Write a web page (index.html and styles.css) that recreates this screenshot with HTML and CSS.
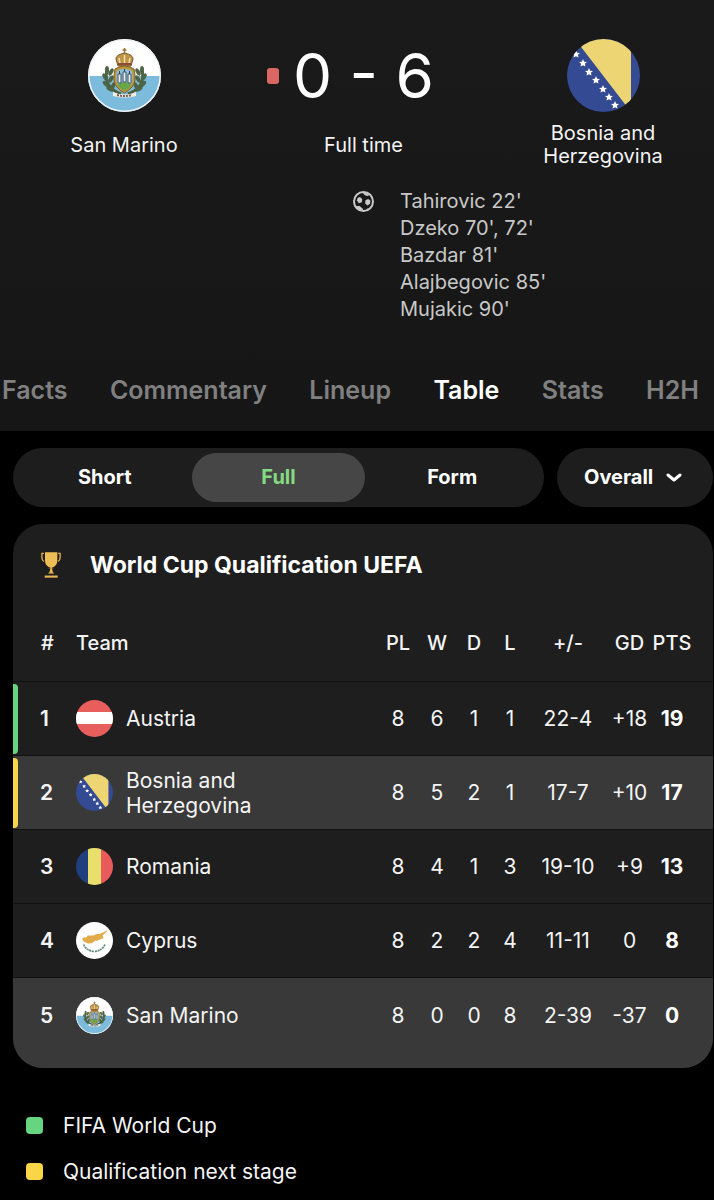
FILE: index.html
```html
<!DOCTYPE html>
<html lang="en">
<head>
    <meta charset="UTF-8">
    <meta name="viewport" content="width=device-width, initial-scale=1.0">
    <title>San Marino - Bosnia and Herzegovina</title>
    <link rel="stylesheet" href="styles.css">
</head>
<body>
    <!-- Shared flags -->
    <svg class="sprite" aria-hidden="true">
        <symbol id="star" viewBox="0 0 20 20">
            <polygon fill="#fff" points="10,0 12.9,6.6 20,7.3 14.7,12 16.2,19 10,15.4 3.8,19 5.3,12 0,7.3 7.1,6.6"/>
        </symbol>
        <symbol id="bosnia" viewBox="0 0 73 73">
            <rect width="73" height="73" fill="#344b93"/>
            <polygon fill="#edd573" points="8,0 64,0 64,73"/>
            <use href="#star" x="5" y="11" width="8" height="8"/>
            <use href="#star" x="12" y="20" width="8" height="8"/>
            <use href="#star" x="18" y="29" width="8" height="8"/>
            <use href="#star" x="25" y="37" width="8" height="8"/>
            <use href="#star" x="32" y="46" width="8" height="8"/>
            <use href="#star" x="38" y="54" width="8" height="8"/>
            <use href="#star" x="44" y="62" width="8" height="8"/>
        </symbol>
        <symbol id="sanmarino" viewBox="0 0 73 73">
            <rect width="73" height="73" fill="#fff"/>
            <rect y="37" width="73" height="36" fill="#7cbbdc"/>
            <!-- laurel branches -->
            <path d="M19 31C16 43 22 51 33 55M54 31C57 43 51 51 40 55" fill="none" stroke="#4b6140" stroke-width="3"/>
            <g fill="#4c6547">
                <ellipse cx="19" cy="31" rx="2" ry="4"/>
                <ellipse cx="23" cy="33" rx="2" ry="4" transform="rotate(30 23 33)"/>
                <ellipse cx="17" cy="38" rx="2" ry="4" transform="rotate(-30 17 38)"/>
                <ellipse cx="23" cy="40" rx="2" ry="4" transform="rotate(30 23 40)"/>
                <ellipse cx="18" cy="45" rx="2" ry="4" transform="rotate(-45 18 45)"/>
                <ellipse cx="25" cy="47" rx="2" ry="4" transform="rotate(20 25 47)"/>
                <ellipse cx="22" cy="50" rx="2" ry="4" transform="rotate(-60 22 50)"/>
                <ellipse cx="54" cy="31" rx="2" ry="4"/>
                <ellipse cx="50" cy="33" rx="2" ry="4" transform="rotate(-30 50 33)"/>
                <ellipse cx="56" cy="38" rx="2" ry="4" transform="rotate(30 56 38)"/>
                <ellipse cx="50" cy="40" rx="2" ry="4" transform="rotate(-30 50 40)"/>
                <ellipse cx="55" cy="45" rx="2" ry="4" transform="rotate(45 55 45)"/>
                <ellipse cx="48" cy="47" rx="2" ry="4" transform="rotate(-20 48 47)"/>
                <ellipse cx="51" cy="50" rx="2" ry="4" transform="rotate(60 51 50)"/>
            </g>
            <!-- crown -->
            <path d="M36.5 9V15M34.5 11H38.5" stroke="#9b7334" stroke-width="1.5"/>
            <path d="M30 27L28 20C28 16 33 15 36.5 14C40 15 45 16 45 20L43 27Z" fill="#bf9447" stroke="#76552a"/>
            <path d="M32 24L31 19M36.5 24V16M41 24L42 19" stroke="#eee0ad" stroke-width="1.5"/>
            <path d="M30 25H43" stroke="#8b4c35" stroke-width="2"/>
            <!-- shield with three towers -->
            <path d="M27 30Q36.5 24 46 30Q49 43 44 48Q40 52 36.5 54Q32 52 29 48Q24 43 27 30Z" fill="#bd963d" stroke="#765c2a"/>
            <path d="M29 32Q36.5 28 44 32Q46 42 42 47L36.5 51L31 47Q27 42 29 32Z" fill="#8cc0df"/>
            <path d="M30 45Q36.5 41 43 45L42 48L36.5 52L31 48Z" fill="#66a747"/>
            <path d="M30 35H33V44H30ZM35 33H38V43H35ZM40 35H43V44H40Z" fill="#e7e9e5" stroke="#41566c"/>
            <path d="M31.5 32V35M36.5 30V33M41.5 32V35" stroke="#344357"/>
            <!-- ribbon -->
            <path d="M25 53Q36.5 58 48 53V57Q36.5 60 25 57Z" fill="#f2eee5"/>
            <path d="M29 56Q36.5 58 44 56" fill="none" stroke="#785b54" stroke-width="2" stroke-dasharray="2 1"/>
            <circle cx="36.5" cy="36.5" r="36" fill="none" stroke="#eef3f5" stroke-width="2"/>
        </symbol>
        <symbol id="austria" viewBox="0 0 37 37">
            <rect width="37" height="37" fill="#e85e5c"/>
            <rect y="12" width="37" height="12" fill="#fff"/>
        </symbol>
        <symbol id="romania" viewBox="0 0 37 37">
            <rect width="12" height="37" fill="#1f3f7e"/>
            <rect x="12" width="13" height="37" fill="#e9df6c"/>
            <rect x="25" width="12" height="37" fill="#e95a5a"/>
        </symbol>
        <symbol id="cyprus" viewBox="0 0 110 110">
            <rect width="110" height="110" fill="#fff"/>
            <path d="M18 49L24 45L30 47L35 40L52 40L61 36L70 36L96 24L79 40L82 48L72 51L63 56L58 55L47 63L35 64L22 57Z" fill="#e3aa49"/>
            <path d="M23 67Q28 83 53 88M86 67Q80 83 56 88" fill="none" stroke="#5f8c74" stroke-width="5" stroke-dasharray="6 2"/>
            <path d="M26 75Q35 86 50 89M83 75Q74 86 59 89" fill="none" stroke="#769e87" stroke-width="2" stroke-dasharray="3 3"/>
        </symbol>
    </svg>

    <header class="match">
        <div class="teams">
            <div class="team">
                <svg class="crest" role="img" aria-label="San Marino"><use href="#sanmarino"/></svg>
                <div class="team-name">San Marino</div>
            </div>
            <div class="result">
                <div class="score-row">
                    <span class="red-card"></span>
                    <span class="score">0 - 6</span>
                </div>
                <div class="team-name">Full time</div>
            </div>
            <div class="team">
                <svg class="crest" role="img" aria-label="Bosnia and Herzegovina"><use href="#bosnia"/></svg>
                <div class="team-name">Bosnia and Herzegovina</div>
            </div>
        </div>

        <div class="goals">
            <svg class="ball" viewBox="0 0 64 64" aria-hidden="true">
                <circle cx="32" cy="32" r="29" fill="none" stroke="currentColor" stroke-width="6"/>
                <g fill="currentColor">
                    <path d="M21 18L28 24L27 34L18 37L12 29L14 21Z"/>
                    <path d="M46 24L53 29L52 39L44 44L37 38L38 28Z"/>
                    <path d="M27 3L51 9L46 15L37 14Z"/>
                    <path d="M8 46L20 46L30 54L31 61L18 59Z"/>
                    <path d="M61 27V40L57 36ZM48 54L40 60L43 53Z"/>
                </g>
            </svg>
            <ul class="scorers">
                <li>Tahirovic 22'</li>
                <li>Dzeko 70', 72'</li>
                <li>Bazdar 81'</li>
                <li>Alajbegovic 85'</li>
                <li>Mujakic 90'</li>
            </ul>
        </div>

        <nav class="tabs">
            <a href="#facts">Facts</a>
            <a href="#commentary">Commentary</a>
            <a href="#lineup">Lineup</a>
            <a href="#table" class="active" aria-current="page">Table</a>
            <a href="#stats">Stats</a>
            <a href="#h2h">H2H</a>
        </nav>
    </header>

    <main>
        <div class="filters">
            <div class="segments">
                <button type="button">Short</button>
                <button type="button" class="active">Full</button>
                <button type="button">Form</button>
            </div>
            <div class="dropdown">
                <select aria-label="Matches">
                    <option>Overall</option>
                    <option>Home</option>
                    <option>Away</option>
                </select>
                <svg class="chevron" viewBox="0 0 16 10" aria-hidden="true">
                    <path d="M2 2L8 7L14 2" fill="none" stroke="#fff" stroke-width="3" stroke-linecap="round" stroke-linejoin="round"/>
                </svg>
            </div>
        </div>

        <section class="card" id="table">
            <h2>
                <svg class="trophy" viewBox="0 0 56 74" aria-hidden="true">
                    <path d="M11 1H46V24C46 35 39 42 31 44C31 53 33 57 37 61H20C24 57 26 53 26 44C18 42 11 35 11 24Z" fill="#efbd55"/>
                    <path d="M8 4H2V15C2 21 4 25 8 27M48 4H54V15C54 21 52 25 48 27" fill="none" stroke="#dda948" stroke-width="4"/>
                    <path d="M21 46H35M21 60H36" stroke="#a7772c" stroke-width="2"/>
                    <rect x="10" y="67" width="37" height="6" fill="#eab84f"/>
                </svg>
                World Cup Qualification UEFA
            </h2>
            <table>
                <thead>
                    <tr>
                        <th class="col-rank">#</th>
                        <th class="col-team">Team</th>
                        <th class="col-pl">PL</th>
                        <th class="col-w">W</th>
                        <th class="col-d">D</th>
                        <th class="col-l">L</th>
                        <th class="col-goals">+/-</th>
                        <th class="col-gd">GD</th>
                        <th class="col-pts">PTS</th>
                    </tr>
                </thead>
                <tbody>
                    <tr>
                        <td><div class="rank promoted">1</div></td>
                        <td><div class="club"><svg class="flag" aria-hidden="true"><use href="#austria"/></svg><span>Austria</span></div></td>
                        <td>8</td><td>6</td><td>1</td><td>1</td><td>22-4</td><td>+18</td><td class="pts">19</td>
                    </tr>
                    <tr class="playing">
                        <td><div class="rank playoff">2</div></td>
                        <td><div class="club"><svg class="flag" aria-hidden="true"><use href="#bosnia"/></svg><span>Bosnia and Herzegovina</span></div></td>
                        <td>8</td><td>5</td><td>2</td><td>1</td><td>17-7</td><td>+10</td><td class="pts">17</td>
                    </tr>
                    <tr>
                        <td><div class="rank">3</div></td>
                        <td><div class="club"><svg class="flag" aria-hidden="true"><use href="#romania"/></svg><span>Romania</span></div></td>
                        <td>8</td><td>4</td><td>1</td><td>3</td><td>19-10</td><td>+9</td><td class="pts">13</td>
                    </tr>
                    <tr>
                        <td><div class="rank">4</div></td>
                        <td><div class="club"><svg class="flag" aria-hidden="true"><use href="#cyprus"/></svg><span>Cyprus</span></div></td>
                        <td>8</td><td>2</td><td>2</td><td>4</td><td>11-11</td><td>0</td><td class="pts">8</td>
                    </tr>
                    <tr class="playing">
                        <td><div class="rank">5</div></td>
                        <td><div class="club"><svg class="flag" aria-hidden="true"><use href="#sanmarino"/></svg><span>San Marino</span></div></td>
                        <td>8</td><td>0</td><td>0</td><td>8</td><td>2-39</td><td>-37</td><td class="pts">0</td>
                    </tr>
                </tbody>
            </table>
        </section>

        <ul class="legend">
            <li><span class="mark green"></span>FIFA World Cup</li>
            <li><span class="mark yellow"></span>Qualification next stage</li>
        </ul>
    </main>
</body>
</html>
```
FILE: styles.css
```css
* {
    box-sizing: border-box;
}
body {
    margin: 0;
    background: #000;
    color: #f4f4f4;
    font-family: Inter, "Liberation Sans", sans-serif;
    font-size: 21px;
    line-height: 25px;
}
ul {
    list-style: none;
    margin: 0;
    padding: 0;
}
button, select {
    border: none;
    font: inherit;
    cursor: pointer;
}
.sprite {
    display: block;
    width: 0;
    height: 0;
}

/* Match header */
.match {
    padding-top: 39px;
    background: linear-gradient(#1a1a1a, #161616);
}
.teams {
    display: grid;
    grid-template-columns: 220px 1fr 220px;
    padding: 0 1px 0 14px;
    font-size: 20px;
    line-height: 23px;
    text-align: center;
}
.team, .result {
    display: flex;
    flex-direction: column;
    align-items: center;
    gap: 10px;
}
.crest {
    width: 73px;
    height: 73px;
    border-radius: 50%;
}
.team-name {
    display: flex;
    align-items: center;
    max-width: 140px;
    min-height: 46px;
}
.score-row {
    display: grid;
    grid-template-columns: 1fr auto 1fr;
    align-items: center;
    gap: 14px;
    width: 100%;
    height: 73px;
}
.red-card {
    justify-self: end;
    width: 12px;
    height: 16px;
    border-radius: 3px;
    background: #db6764;
}
.score {
    color: #fff;
    font-size: 62px;
    line-height: 73px;
}
.goals {
    display: grid;
    grid-template-columns: 1fr 21px 1fr;
    column-gap: 26px;
    padding: 20px 1px 0 14px;
    color: #c8c8c8;
    font-size: 20px;
    line-height: 27px;
}
.ball {
    grid-column: 2;
    width: 21px;
    height: 27px;
}
.tabs {
    display: flex;
    justify-content: space-between;
    padding: 52px 15px 26px 2px;
    font-size: 25px;
    font-weight: 600;
    line-height: 30px;
}
.tabs a {
    color: #808080;
    text-decoration: none;
}
.tabs .active {
    color: #fff;
}

/* Filters */
main {
    padding: 17px 1px 16px 13px;
}
.filters {
    display: flex;
    gap: 13px;
    height: 59px;
    font-size: 20px;
    font-weight: 700;
}
.segments {
    display: flex;
    flex: 1;
    padding: 5px;
    border-radius: 30px;
    background: #1d1d1d;
}
.segments button {
    flex: 1;
    border-radius: 25px;
    background: none;
    color: #fff;
}
.segments .active {
    background: #464646;
    color: #85d983;
}
.dropdown {
    display: grid;
    width: 156px;
}
.dropdown select {
    grid-area: 1 / 1;
    appearance: none;
    padding: 0 27px;
    border-radius: 30px;
    background: #1d1d1d;
    color: #fff;
}
.chevron {
    grid-area: 1 / 1;
    align-self: center;
    justify-self: end;
    width: 16px;
    height: 10px;
    margin-right: 31px;
    pointer-events: none;
}

/* Standings */
.card {
    margin-top: 17px;
    border-radius: 30px;
    background: #1e1e1e;
    overflow: hidden;
}
.card h2 {
    display: flex;
    align-items: center;
    gap: 29px;
    margin: 0;
    padding: 26px 28px;
    color: #fff;
    font-size: 23px;
    font-weight: 700;
    line-height: 30px;
}
.trophy {
    width: 20px;
    height: 26px;
}
table {
    width: 100%;
    table-layout: fixed;
    border-collapse: separate;
    border-spacing: 0;
}
th {
    height: 75px;
    padding: 0;
    font-size: 20px;
    font-weight: 500;
}
td {
    height: 74px;
    padding: 0;
    border-top: 1px solid #111;
    text-align: center;
}
.col-rank {
    width: 63px;
    padding-left: 6px;
}
.col-team {
    text-align: left;
}
.col-pl {
    width: 40px;
}
.col-w {
    width: 38px;
}
.col-d, .col-l {
    width: 36px;
}
.col-goals {
    width: 80px;
}
.col-gd {
    width: 43px;
}
.col-pts {
    width: 62px;
    padding-right: 20px;
}
.pts {
    padding-right: 20px;
    color: #fff;
    font-weight: 700;
}
.playing td {
    background: #393939;
}
tbody tr:last-child td {
    height: 91px;
    padding-bottom: 16px;
}
.rank {
    display: flex;
    align-items: center;
    gap: 22px;
    font-weight: 600;
}
.rank::before {
    content: "";
    width: 5px;
    height: 70px;
    border-radius: 0 4px 4px 0;
}
.promoted::before {
    background: #67d580;
}
.playoff::before {
    background: #f9d647;
}
.club {
    display: flex;
    align-items: center;
    gap: 13px;
    max-width: 200px;
    text-align: left;
}
.flag {
    flex: none;
    width: 37px;
    height: 37px;
    border-radius: 50%;
}

/* Legend */
.legend {
    display: grid;
    gap: 21px;
    padding: 45px 13px 0;
}
.legend li {
    display: flex;
    align-items: center;
    gap: 20px;
}
.mark {
    width: 17px;
    height: 17px;
    border-radius: 4px;
}
.green {
    background: #67d580;
}
.yellow {
    background: #f9d647;
}
```
